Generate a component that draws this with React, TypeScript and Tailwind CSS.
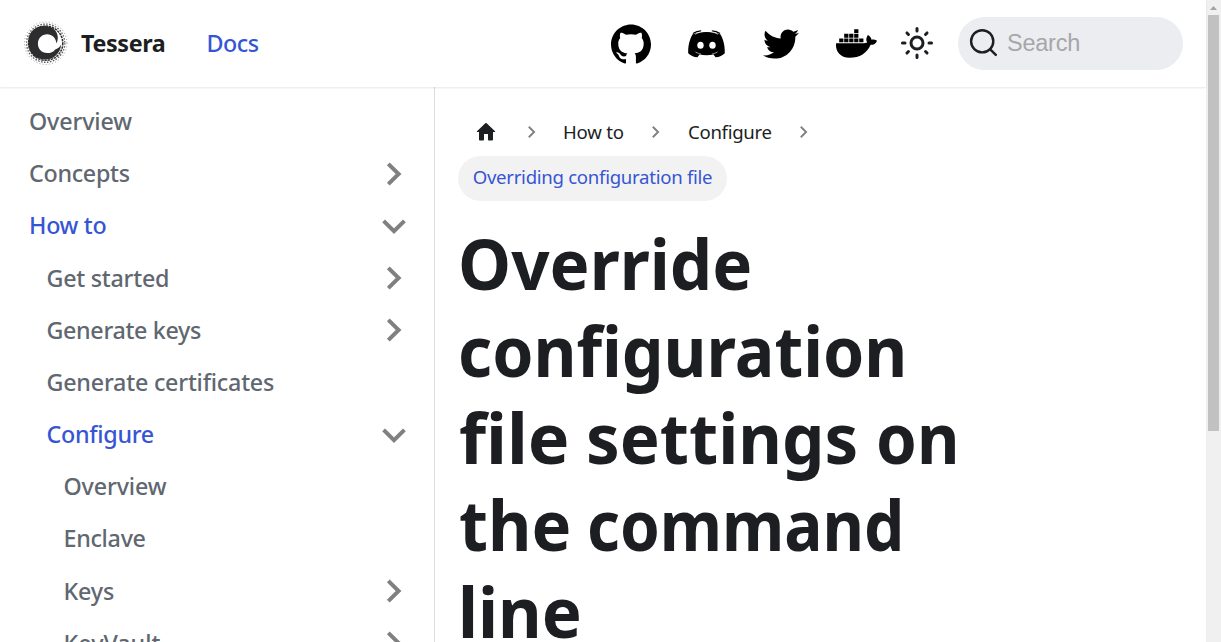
import { FaDocker, FaTwitter } from "react-icons/fa";
import { SiGithub } from "react-icons/si";

type NavItem = { label: string; level: number; active?: boolean; chevron?: "right" | "down"; tracking?: string };

const items: NavItem[] = [
  { label: "Overview", level: 0, tracking: "tracking-[-0.15px]" },
  { label: "Concepts", level: 0, chevron: "right", tracking: "tracking-[-0.3px]" },
  { label: "How to", level: 0, active: true, chevron: "down", tracking: "tracking-[-0.3px]" },
  { label: "Get started", level: 1, chevron: "right", tracking: "tracking-[-0.25px]" },
  { label: "Generate keys", level: 1, chevron: "right", tracking: "tracking-[-0.35px]" },
  { label: "Generate certificates", level: 1, tracking: "tracking-[-0.22px]" },
  { label: "Configure", level: 1, active: true, chevron: "down", tracking: "tracking-[-0.3px]" },
  { label: "Overview", level: 2, tracking: "tracking-[-0.15px]" },
  { label: "Enclave", level: 2, tracking: "tracking-[-0.3px]" },
  { label: "Keys", level: 2, chevron: "right", tracking: "tracking-[-0.15px]" },
  { label: "KeyVault", level: 2, chevron: "right" },
];

const indents = ["pl-[29px]", "pl-[46.500px]", "pl-[63.500px]"];

function SwirlLogo() {
  return (
    <svg className="h-[50px] w-[50px]" viewBox="0 0 50 50" fill="none">
      <g stroke="#2d2d2f">
        <circle cx="25.7" cy="25.2" r="21.2" strokeWidth="0.9" strokeDasharray="1 2.2" opacity="0.5" />
        <circle cx="25.7" cy="25.2" r="19.1" strokeWidth="1.3" strokeDasharray="1.5 1.5" opacity="0.8" />
        <circle cx="25.7" cy="25.2" r="17.1" strokeWidth="1.5" strokeDasharray="2.4 0.8" />
      </g>
      <path
        fill="#2d2d2f"
        d="M36.6 25.4C39.4 19 37.4 12 30.5 9C23.5 6.4 14.5 8.600 10.6 15C6.600 21.500 7.900 31.400 12.8 36.600C18.500 42.600 29 43 35 38.200C38.600 35.300 40.700 31.500 41.200 26.500C39.800 29.200 37.600 31 35.200 31.400C33.200 34.100 30.300 35.200 27 35.100C21.800 35 17.900 30.900 17.900 25.800C17.900 20.400 22 16.300 27.200 16.300C32.200 16.300 35.800 20 36.600 25.400Z"
      />
    </svg>
  );
}

function DiscordIcon() {
  return (
    <svg className="h-[28px] w-[37px]" viewBox="0 0 37 28" fill="none">
      <path
        fill="#000"
        d="M8 3.2C14.800 1.600 22.200 1.600 29 3.200L32.600 4.400C35.400 9.700 37 15.300 36.800 23.200C34.600 25.600 31.400 27 27.600 27.200L25.400 24.500C21 25.600 16 25.600 11.600 24.500L9.400 27.200C5.600 27 2.400 25.600 .2 23.200C0 15.300 1.600 9.700 4.400 4.400Z"
      />
      <path stroke="#fff" strokeWidth="0.600" d="M7.500 22C10 23.300 11.500 23.800 13 24.100M29.500 22C27 23.300 25.500 23.800 24 24.100" />
      <path stroke="#000" strokeWidth="1.3" d="M5 3.600C7.600 1.700 10.300 .9 13.200.8M32 3.600C29.400 1.700 26.700 .9 23.800.8" />
      <path stroke="#fff" strokeWidth="0.700" d="M7.300 4.300C9.400 2.900 12 2 14.600 1.700M29.700 4.300C27.600 2.900 25 2 22.400 1.700" />
      <ellipse cx="12.500" cy="15.200" rx="3.200" ry="3.500" fill="#fff" />
      <ellipse cx="24.500" cy="15.200" rx="3.200" ry="3.500" fill="#fff" />
    </svg>
  );
}

function SunIcon() {
  return (
    <svg className="h-[36px] w-[36px]" viewBox="0 0 24 24" fill="none" stroke="#1c1e21" strokeWidth="2" strokeLinecap="round">
      <circle cx="12" cy="12" r="4" />
      <path d="M12 2.300v1.700M12 20v1.700M2.300 12h1.700M20 12h1.700M5.300 5.300l1 1M17.700 17.700l1 1M5.300 18.700l1-1M17.700 6.300l1-1" />
    </svg>
  );
}

function Chevron({ dir }: { dir: "right" | "down" }) {
  return (
    <svg className="h-[30px] w-[30px]" viewBox="0 0 30 30" fill="none" stroke="#808080" strokeWidth="4">
      <path d={dir === "right" ? "M9.300 4.800L19.600 15L9.300 25.200" : "M4.600 9.900L15 20.200L25.400 9.900"} />
    </svg>
  );
}

function CrumbArrow() {
  return (
    <svg className="h-[14px] w-[10px]" viewBox="0 0 10 14" fill="none" stroke="#808080" strokeWidth="1.9">
      <path d="M1.800 1.800L7.100 7L1.800 12.200" />
    </svg>
  );
}

function Word({ text, className, scale }: { text: string; className: string; scale: string }) {
  return (
    <span className={`block ${className}`}>
      <span className={`inline-block origin-left whitespace-nowrap ${scale}`}>{text}</span>
    </span>
  );
}

export default function App() {
  return (
    <div className="flex h-[642px] w-[1221px] overflow-hidden bg-white font-['Noto_Sans',sans-serif] text-[#1c1e21]">
      <div className="flex w-[1206px] flex-col">
        <header className="z-10 flex h-[87px] shrink-0 items-center bg-white pr-[23px] pl-[20px] shadow-[0_1px_2px_0_rgba(0,0,0,0.1)]">
          <span className="mb-[1px]"><SwirlLogo /></span>
          <span className="ml-[11px] w-[125.500px] text-[23.3px] font-bold tracking-[-0.35px]">Tessera</span>
          <a className="text-[23.3px] font-medium tracking-[-0.5px] text-[#3655d5]">Docs</a>
          <div className="ml-auto flex items-center">
            <SiGithub className="h-[40px] w-[40px] text-black" />
            <span className="ml-[37px]"><DiscordIcon /></span>
            <FaTwitter className="ml-[38px] h-[36px] w-[36px] text-black" />
            <FaDocker className="ml-[37px] h-[41px] w-[41px] text-black" />
            <span className="mb-[1px] ml-[22.500px]"><SunIcon /></span>
            <div className="mb-[0.500px] ml-[23px] flex h-[53px] w-[225px] items-center rounded-full bg-[#ebedf0] pl-[11px]">
              <svg className="h-[30px] w-[30px]" viewBox="0 0 30 30" fill="none" stroke="#1c1e21" strokeWidth="2.4" strokeLinecap="round">
                <circle cx="13.200" cy="13.300" r="11.100" />
                <path d="M21.200 21.300L26.800 26.900" />
              </svg>
              <span className="ml-[8px] font-['Liberation_Sans',sans-serif] text-[23.5px] tracking-[-0.25px] text-[#a5a7aa]">Search</span>
            </div>
          </div>
        </header>
        <div className="flex min-h-0 flex-1">
          <nav className="flex w-[435px] shrink-0 flex-col overflow-hidden border-r border-[#dadde1] pt-[8.500px]">
            {items.map((it, i) => (
              <div
                key={i}
                className={`flex h-[52.17px] shrink-0 items-center justify-between pr-[25px] text-[23.3px] font-medium ${indents[it.level]} ${it.active ? "text-[#3655d5]" : "text-[#606770]"}`}
              >
                <span className={it.tracking}>{it.label}</span>
                {it.chevron && <Chevron dir={it.chevron} />}
              </div>
            ))}
          </nav>
          <main className="flex-1 overflow-hidden pt-[22px] pl-[23px]">
            <div className="flex h-[45px] items-center text-[18.6px]">
              <svg className="ml-[16px] h-[24px] w-[24px]" viewBox="0 0 24 24" fill="#1c1e21">
                <path d="M10 19.500v-5.500h4v5.500c0 .55.45 1 1 1h3c.55 0 1-.45 1-1v-7.500h1.700c.46 0 .68-.57.33-.87L12.670 3.200c-.38-.34-.96-.34-1.340 0l-8.360 7.930c-.34.3-.13.87.33.87H5v7.500c0 .55.45 1 1 1h3c.55 0 1-.45 1-1z" />
              </svg>
              <span className="ml-[29px]"><CrumbArrow /></span>
              <span className="ml-[26px] w-[88px] tracking-[-0.2px]">How to</span>
              <CrumbArrow />
              <span className="ml-[27px] w-[111px] tracking-[-0.3px]">Configure</span>
              <CrumbArrow />
            </div>
            <div className="mt-[2px] flex h-[45px] w-[269px] items-center justify-center rounded-full bg-[#f2f2f2] pb-[3px] text-[18.6px] tracking-[-0.28px] whitespace-nowrap text-[#3655d5]">
              Overriding configuration file
            </div>
            <h1 className="mt-[18.500px] text-[70px] leading-[87px] font-bold">
              <span className="flex"><Word text="Override" className="w-[300px]" scale="scale-x-[0.96]" /></span>
              <span className="flex"><Word text="configuration" className="w-[460px]" scale="scale-x-[0.945]" /></span>
              <span className="flex">
                <Word text="file" className="ml-[1px] w-[127px]" scale="scale-x-[1]" />
                <Word text="settings" className="w-[290px]" scale="scale-x-[0.96]" />
                <Word text="on" className="w-[90px]" scale="scale-x-[0.935]" />
              </span>
              <span className="flex">
                <Word text="the" className="ml-[1px] w-[128px]" scale="scale-x-[0.955]" />
                <Word text="command" className="w-[330px]" scale="scale-x-[0.912]" />
              </span>
              <span className="flex"><Word text="line" className="w-[200px]" scale="scale-x-[0.96]" /></span>
            </h1>
          </main>
        </div>
      </div>
      <div className="flex w-[15px] flex-col items-center bg-[#f0f0f0]">
        <svg className="h-[15px] w-[15px] shrink-0" viewBox="0 0 15 15"><path d="M4 10L7.500 6L11 10Z" fill="#a3a3a3" /></svg>
        <div className="h-[416px] w-[11px] bg-[#c1c1c1]" />
      </div>
    </div>
  );
}
